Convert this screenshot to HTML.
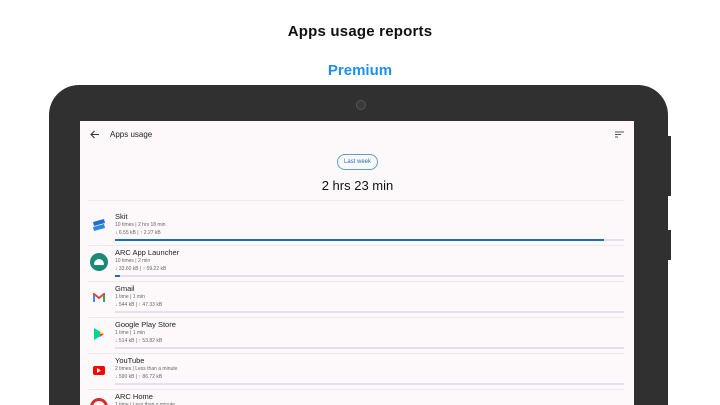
<!DOCTYPE html>
<html><head><meta charset="utf-8"><style>
*{margin:0;padding:0;box-sizing:border-box}
html,body{width:720px;height:405px;overflow:hidden}
body{background:#fff;font-family:"Liberation Sans",sans-serif;position:relative}
.a{position:absolute}
.t1{left:0;width:720px;top:23px;text-align:center;font-size:15px;font-weight:bold;color:#111;letter-spacing:0.2px}
.t2{left:0;width:720px;top:62px;text-align:center;font-size:15px;font-weight:bold;color:#1e8ff0}
.tab{left:49px;top:85px;width:619px;height:320px;background:#303030;border-radius:30px 30px 0 0}
.btn{background:#303030;left:667px;width:4px}
.scr{left:80px;top:121px;width:554px;height:284px;background:#fdf9fb}
.name{font-size:7.5px;color:#222;left:115px}
.sub{font-size:5px;color:#666;left:115px}
.bar{left:115px;width:509px;height:2px;background:#e6e0ea}
.div{left:88px;width:536px;height:1px;background:#eee8ec}
</style></head><body>
<div class="a t1">Apps usage reports</div>
<div class="a t2">Premium</div>
<div class="a tab"></div>
<div class="a btn" style="top:136px;height:60px"></div>
<div class="a btn" style="top:230px;height:30px"></div>
<div class="a" style="left:356px;top:100px;width:10px;height:10px;border-radius:50%;background:#3a3a3a;border:1px solid #555"></div>
<div class="a scr"></div>
<svg class="a" style="left:90px;top:130px" width="10" height="9" viewBox="0 0 10 9"><path d="M9 4.5H1.5M4.5 1L1 4.5 4.5 8" stroke="#333" stroke-width="1.1" fill="none"/></svg>
<div class="a" style="left:110px;top:130px;font-size:8px;color:#222">Apps usage</div>
<svg class="a" style="left:615px;top:131px" width="9" height="7"><path d="M0 1h9M0 3.5h6M0 6h3" stroke="#555" stroke-width="1"/></svg>
<div class="a" style="left:337px;top:154px;width:41px;height:16px;border:1px solid #5aa0c8;border-radius:8px;font-size:6px;color:#1e6fb5;text-align:center;line-height:15px">Last week</div>
<div class="a" style="left:0;width:715px;top:178px;text-align:center;font-size:13px;color:#111">2 hrs 23 min</div>
<div class="a div" style="top:200px"></div>

<div class="a name" style="top:212px">Skit</div>
<div class="a sub" style="top:222px">10 times | 2 hrs 18 min</div>
<div class="a sub" style="top:230px">↓ 6.55 kB | ↑ 2.27 kB</div>
<div class="a bar" style="top:239px"><div style="width:489px;height:2px;background:#1f6db5"></div></div>
<svg class="a" style="left:92px;top:219px" width="14" height="12"><path d="M1 3l11-3 1 4-11 3z" fill="#1e6fd0"/><path d="M1 8l11-3 1 4-11 3z" fill="#2b86e0"/></svg>
<div class="a div" style="top:245px"></div>

<div class="a name" style="top:248px">ARC App Launcher</div>
<div class="a sub" style="top:258px">10 times | 2 min</div>
<div class="a sub" style="top:266px">↓ 33.60 kB | ↑ 59.22 kB</div>
<div class="a bar" style="top:275px"><div style="width:5px;height:2px;background:#1f6db5"></div></div>
<div class="a" style="left:90px;top:253px;width:18px;height:18px;border-radius:50%;background:#1a8a74"></div>
<div class="a" style="left:94px;top:259px;width:10px;height:6px;border-radius:5px 5px 1px 1px;background:#fff"></div>
<div class="a div" style="top:281px"></div>

<div class="a name" style="top:284px">Gmail</div>
<div class="a sub" style="top:294px">1 time | 1 min</div>
<div class="a sub" style="top:302px">↓ 544 kB | ↑ 47.33 kB</div>
<div class="a bar" style="top:311px"></div>
<svg class="a" style="left:93px;top:293px" width="12" height="9"><path d="M1 9V1l5 4 5-4v8" stroke="#ea4335" stroke-width="2" fill="none"/><path d="M1 9V2" stroke="#4285f4" stroke-width="2"/><path d="M11 9V2" stroke="#34a853" stroke-width="2"/></svg>
<div class="a div" style="top:317px"></div>

<div class="a name" style="top:320px">Google Play Store</div>
<div class="a sub" style="top:330px">1 time | 1 min</div>
<div class="a sub" style="top:338px">↓ 514 kB | ↑ 53.82 kB</div>
<div class="a bar" style="top:347px"></div>
<svg class="a" style="left:94px;top:328px" width="10" height="12"><path d="M0 0l10 6-10 6z" fill="#00c3ff"/><path d="M0 0l6 6-6 6z" fill="#00d977"/><path d="M6 6l4 0-4 3z" fill="#ff3a44"/><path d="M6 6l4 0-4-3z" fill="#ffd400"/></svg>
<div class="a div" style="top:353px"></div>

<div class="a name" style="top:356px">YouTube</div>
<div class="a sub" style="top:366px">2 times | Less than a minute</div>
<div class="a sub" style="top:374px">↓ 590 kB | ↑ 86.72 kB</div>
<div class="a bar" style="top:383px"></div>
<div class="a" style="left:93px;top:366px;width:12px;height:9px;border-radius:2px;background:#f00"></div>
<svg class="a" style="left:97px;top:368px" width="5" height="5"><path d="M0 0l4 2.5-4 2.5z" fill="#fff"/></svg>
<div class="a div" style="top:389px"></div>

<div class="a name" style="top:392px">ARC Home</div>
<div class="a sub" style="top:402px">1 time | Less than a minute</div>
<div class="a" style="left:90px;top:398px;width:18px;height:18px;border-radius:50%;border:3px solid #d32f2f"></div>
</body></html>
